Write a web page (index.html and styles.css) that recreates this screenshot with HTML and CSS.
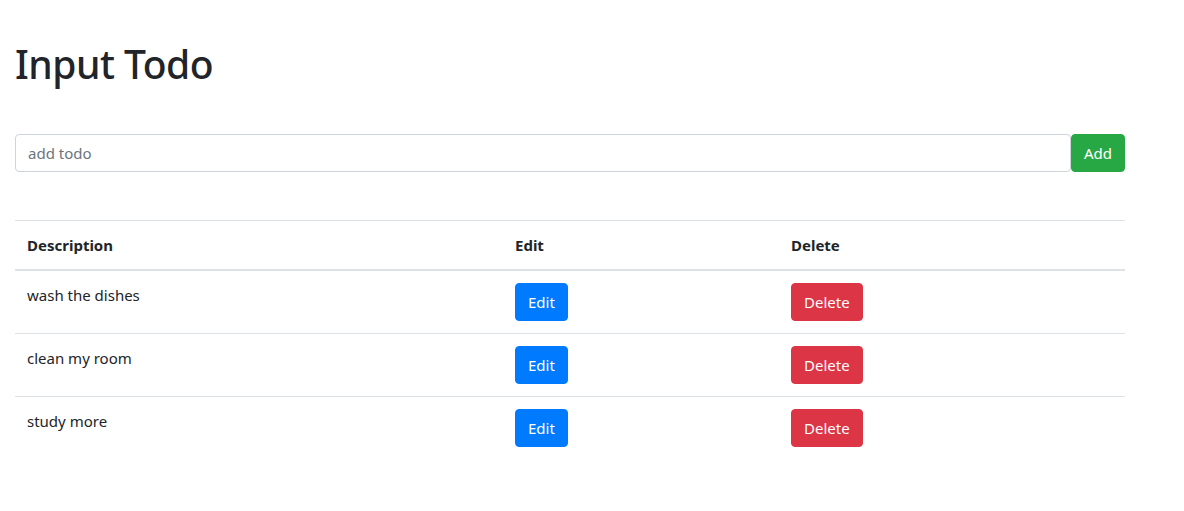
FILE: index.html
```html
<!DOCTYPE html>
<html lang="en">
<head>
<meta charset="utf-8">
<title>Input Todo</title>
<link rel="stylesheet" href="styles.css">
</head>
<body>
<div class="container">
  <h1 class="title">Input Todo</h1>
  <form class="todo-form">
    <input class="form-control" type="text" placeholder="add todo">
    <button class="btn btn-success" type="button">Add</button>
  </form>
  <table class="table">
    <thead>
      <tr>
        <th class="col-desc">Description</th>
        <th class="col-edit">Edit</th>
        <th class="col-del">Delete</th>
      </tr>
    </thead>
    <tbody>
      <tr>
        <td>wash the dishes</td>
        <td><button class="btn btn-primary" type="button">Edit</button></td>
        <td><button class="btn btn-danger" type="button">Delete</button></td>
      </tr>
      <tr>
        <td>clean my room</td>
        <td><button class="btn btn-primary" type="button">Edit</button></td>
        <td><button class="btn btn-danger" type="button">Delete</button></td>
      </tr>
      <tr>
        <td>study more</td>
        <td><button class="btn btn-primary" type="button">Edit</button></td>
        <td><button class="btn btn-danger" type="button">Delete</button></td>
      </tr>
    </tbody>
  </table>
</div>
</body>
</html>
```
FILE: styles.css
```css
* { box-sizing: border-box; }
body {
  margin: 0;
  font-family: "Noto Sans", "Open Sans", sans-serif;
  font-size: 15px;
  line-height: 24px;
  color: #212529;
  background: #fff;
}
.container {
  width: 1140px;
  padding: 0 15px;
}
.title {
  margin: 40px 0 0;
  font-size: 39px;
  letter-spacing: -0.5px;
  font-weight: 500;
  line-height: 48px;
}
.todo-form {
  display: flex;
  margin-top: 46px;
}
.form-control {
  flex: 1;
  height: 38px;
  padding: 6px 12px;
  font-family: inherit;
  font-size: 15px;
  line-height: 24px;
  color: #495057;
  border: 1px solid #ced4da;
  border-radius: 4px;
  outline: none;
}
.form-control::placeholder { color: #6c757d; }
.btn {
  display: inline-block;
  height: 38px;
  padding: 6px 12px;
  font-family: inherit;
  font-size: 15px;
  line-height: 24px;
  color: #fff;
  border: 1px solid transparent;
  border-radius: 4px;
  cursor: pointer;
}
.btn-success { background: #28a745; border-color: #28a745; }
.btn-primary { background: #007bff; border-color: #007bff; }
.btn-danger { background: #dc3545; border-color: #dc3545; }
.table {
  width: 100%;
  margin-top: 48px;
  border-collapse: collapse;
  table-layout: fixed;
}
.table th, .table td {
  padding: 12px;
  text-align: left;
  vertical-align: top;
  border-top: 1px solid #dee2e6;
}
.table thead th {
  font-weight: 700;
  border-bottom: 2px solid #dee2e6;
}
.col-desc { width: 488px; }
.col-edit { width: 276px; }
.col-del { width: 346px; }
```
